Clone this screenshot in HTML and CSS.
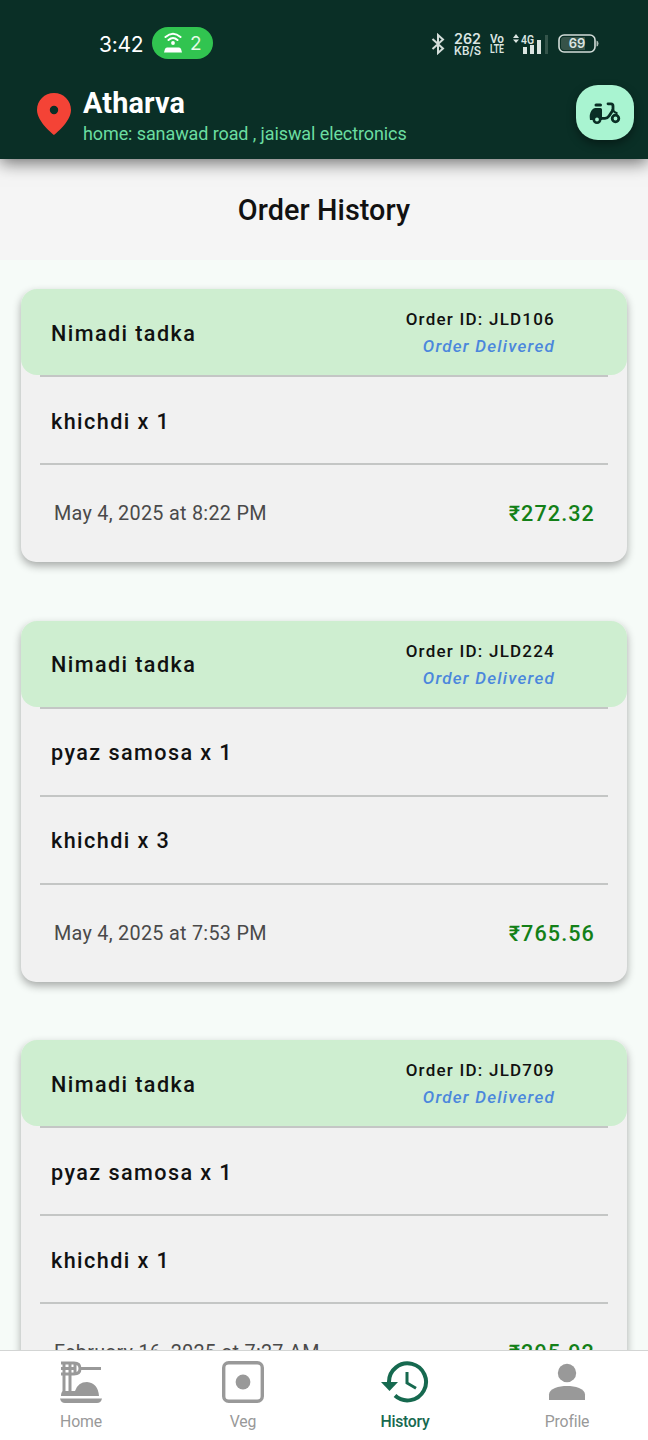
FILE: index.html
```html
<!DOCTYPE html>
<html lang="en">
<head>
<meta charset="utf-8">
<title>Order History</title>
<link rel="stylesheet" href="styles.css">
</head>
<body>
<div class="app">
  <header class="top">
    <div class="status">
      <span class="clock">3:42</span>
      <span class="hotspot">
        <svg width="20" height="22" viewBox="0 0 20 22" fill="none" stroke="#fff" stroke-width="2" stroke-linecap="round"><path d="M2.500 5Q10-1.500 17.500 5M5.500 8Q10 4 14.500 8"/><circle cx="10" cy="11" r="1.900" fill="#fff" stroke="none"/><path d="M4 15.500H16Q17.500 15.500 18 17L19 20.500H1L2 17Q2.500 15.500 4 15.500Z" fill="#fff" stroke="none"/></svg>
        <span>2</span>
      </span>
      <div class="indicators">
        <svg class="bt" width="14" height="22" viewBox="0 0 14 22" fill="none" stroke="#d3ddd9" stroke-width="2"><path d="M1.500 6L12 15.500L7 20V2L12 6.500L1.500 16"/></svg>
        <svg class="speed" width="28" height="26" viewBox="0 0 28 26"><text class="rate" x="0" y="13" textLength="27" lengthAdjust="spacingAndGlyphs">262</text><text class="unit" x="0" y="24" textLength="27" lengthAdjust="spacingAndGlyphs">KB/S</text></svg>
        <svg class="volte" width="15" height="26" viewBox="0 0 15 26"><text x="0" y="12" textLength="14" lengthAdjust="spacingAndGlyphs">Vo</text><text x="0" y="22" textLength="14" lengthAdjust="spacingAndGlyphs">LTE</text></svg>
        <svg class="signal" width="36" height="22" viewBox="0 0 36 22" fill="#dbe5e1"><path d="M0 5L3 1L6 5ZM0 6.500H6L3 10ZM10 14H14V21H10ZM17 12H21V21H17ZM24 7H28V21H24Z"/><path d="M32 2H35V21H32Z" fill="#34544a"/><text class="net" x="8" y="10.500" textLength="13" lengthAdjust="spacingAndGlyphs">4G</text></svg>
        <svg class="battery" width="42" height="20" viewBox="0 0 42 20"><rect x="1" y="1" width="36" height="17" rx="5" fill="none" stroke="#d3ddd9" stroke-width="1.600"/><path d="M6 3H27V16H6Q3 16 3 13V6Q3 3 6 3Z" fill="#365349"/><path d="M38.500 6.500Q40.500 7 40.500 9.500T38.500 12.500Z" fill="#aebdb6"/><text class="charge" x="19" y="14.300" text-anchor="middle">69</text></svg>
      </div>
    </div>
    <div class="address">
      <svg class="pin" width="34" height="42" viewBox="0 0 34 42"><path fill="#f44336" fill-rule="evenodd" d="M17 0C7.500 0 0 7.500 0 17C0 29 17 42 17 42S34 29 34 17C34 7.500 26.500 0 17 0ZM17 12.800A4.200 4.200 0 1 1 17 21.200A4.200 4.200 0 1 1 17 12.800Z"/></svg>
      <div class="place"><div class="name">Atharva</div><div class="street">home: sanawad road , jaiswal electronics</div></div>
      <button class="scooter" aria-label="Delivery"><svg width="32" height="22" viewBox="0 0 32 22"><path fill="#0a2e25" d="M7 1.500H11.500Q13 1.500 13 3T11.500 4.500H7Q5.500 4.500 5.500 3T7 1.500ZM6 6H11.500Q13 6 13 7.500V18H1Q0 12 2.500 8.500Q4 6 6 6Z"/><path d="M19 1.800H22Q24 1.800 24 4V8L20 14Q18.500 16.300 16 16.300H11" fill="none" stroke="#0a2e25" stroke-width="2.800" stroke-linecap="round"/><path d="M23 7Q25 10.500 28.500 11.500" fill="none" stroke="#0a2e25" stroke-width="2"/><circle cx="8" cy="17.500" r="3.200" fill="#a9f4d1" stroke="#0a2e25" stroke-width="2.600"/><circle cx="26.500" cy="16.500" r="3.300" fill="#a9f4d1" stroke="#0a2e25" stroke-width="2.800"/></svg></button>
    </div>
  </header>
  <h1 class="title">Order History</h1>
  <main class="orders">
    <article class="card">
      <div class="card-head"><span class="restaurant">Nimadi tadka</span><div class="meta"><span>Order ID: JLD106</span><em>Order Delivered</em></div></div>
      <div class="item">khichdi x 1</div>
      <div class="foot"><span>May 4, 2025 at 8:22 PM</span><strong>₹272.32</strong></div>
    </article>
    <article class="card">
      <div class="card-head"><span class="restaurant">Nimadi tadka</span><div class="meta"><span>Order ID: JLD224</span><em>Order Delivered</em></div></div>
      <div class="item">pyaz samosa x 1</div>
      <div class="item">khichdi x 3</div>
      <div class="foot"><span>May 4, 2025 at 7:53 PM</span><strong>₹765.56</strong></div>
    </article>
    <article class="card">
      <div class="card-head"><span class="restaurant">Nimadi tadka</span><div class="meta"><span>Order ID: JLD709</span><em>Order Delivered</em></div></div>
      <div class="item">pyaz samosa x 1</div>
      <div class="item">khichdi x 1</div>
      <div class="foot"><span>February 16, 2025 at 7:27 AM</span><strong>₹295.92</strong></div>
    </article>
  </main>
  <nav class="tabs">
    <a class="tab"><svg width="42" height="42" viewBox="0 0 42 42" fill="none" stroke="#999"><path stroke-width="3" d="M1 2H14Q20 2 20 7.500T14 13H1M1 7.500H14M4 1V33M10 1V33M15 2V13"/><path stroke-width="3" d="M20 7.500H41"/><path fill="#999" stroke="none" d="M3 30H15Q18 21 27 21Q38 22 39 35H1Q1 31 3 30ZM0 37.500H42Q41 42 37 42H5Q1 42 0 37.500Z"/></svg><span>Home</span></a>
    <a class="tab"><svg width="42" height="42" viewBox="0 0 42 42"><rect x="1.700" y="1.700" width="38.600" height="38.600" rx="5" fill="none" stroke="#999" stroke-width="3.400"/><circle cx="21" cy="21" r="7.400" fill="#999"/></svg><span>Veg</span></a>
    <a class="tab active"><svg width="48" height="42" viewBox="0 0 48 42"><path fill="none" stroke="#16694f" stroke-width="4" d="M8 22V21A18.500 18.500 0 1 1 14 34.500"/><path fill="#16694f" d="M0 21H17L8.500 30Z"/><path fill="none" stroke="#16694f" stroke-width="3" d="M26 11V22L35 27.300"/></svg><span>History</span></a>
    <a class="tab"><svg width="38" height="42" viewBox="0 0 38 42" fill="#999"><circle cx="19" cy="12" r="9.200"/><path d="M1 39V33.500C1 27.500 11 25 19 25S37 27.500 37 33.500V39Z"/></svg><span>Profile</span></a>
  </nav>
</div>
</body>
</html>
```
FILE: styles.css
```css
* { box-sizing: border-box; }
body { margin: 0; font-family: Roboto, "Noto Sans", sans-serif; }
.app { display: flex; flex-direction: column; width: 648px; height: 1440px; overflow: hidden; background: #f6fbf8; }
.top { flex: none; height: 159px; padding: 27px 14px 0 37px; background: #0a2f26; box-shadow: 0 4px 16px rgba(0,0,0,.55); z-index: 1; }
.status { display: flex; align-items: center; height: 32px; padding-left: 62px; }
.clock { width: 53px; padding-top: 2px; font: 400 21px Inter, sans-serif; letter-spacing: -.3px; color: #fff; }
.hotspot { display: flex; align-items: center; gap: 7px; width: 61px; height: 32px; padding-left: 11px; border-radius: 16px; background: #31c450; color: #e5fbe8; font: 400 19px Inter, sans-serif; }
.indicators { display: flex; align-items: center; margin-left: 218px; padding-top: 1px; }
.bt { margin-right: 9px; }
.speed { margin-right: 8px; fill: #dbe5e1; }
.rate { font: 600 14px Inter, sans-serif; }
.unit { font: 600 12px Inter, sans-serif; }
.volte { margin-right: 8px; fill: #dbe5e1; font: 600 12px Roboto, sans-serif; }
.signal { margin-right: 9px; }
.net { font: 600 13px Roboto, sans-serif; }
.charge { font: 600 13px Inter, sans-serif; fill: #dbe5e1; }
.address { display: flex; padding-top: 26px; }
.pin { margin-top: 8px; }
.place { flex: 1; padding: 1px 0 0 12px; }
.name { font-size: 28.800px; line-height: 35px; font-weight: 700; letter-spacing: .150px; color: #fff; }
.street { font-size: 18px; line-height: 26px; letter-spacing: -.100px; color: #6bdda0; }
.scooter { display: grid; place-items: center; width: 58px; height: 55px; padding: 0; border: 0; border-radius: 22px; background: #a9f4d1; box-shadow: 0 4px 10px rgba(0,0,0,.4); }
.title { flex: none; height: 101px; margin: 0; background: #f5f5f5; text-align: center; font-size: 28.800px; line-height: 102px; font-weight: 500; letter-spacing: .080px; color: #111; }
.orders { flex: 1; min-height: 0; overflow: hidden; display: flex; flex-direction: column; gap: 58.200px; padding: 29.200px 21px 0; }
.card { flex: none; border-radius: 15px; background: #f1f1f1; box-shadow: 0 4px 8px rgba(0,0,0,.32); }
.card-head { display: flex; justify-content: space-between; align-items: center; height: 86.200px; padding: 2px 72px 0 30px; border-radius: 16px; background: #ceeed0; }
.restaurant, .item { font-size: 21.600px; font-weight: 500; letter-spacing: 1.420px; color: #111; }
.meta { display: flex; flex-direction: column; align-items: flex-end; font-size: 17px; line-height: 27px; font-weight: 500; letter-spacing: 1.220px; color: #111; }
.meta em { color: #4b87dc; }
.item, .foot { display: flex; align-items: center; margin: 0 19px; border-top: 2px solid #c4c6c5; }
.item { height: 88px; padding: 2px 11px 0; }
.foot { justify-content: space-between; height: 99px; padding: 0 13px 0 14px; font-size: 19.800px; letter-spacing: .290px; color: #4a4a4a; }
.foot strong { font-size: 21.600px; font-weight: 500; letter-spacing: 1.100px; color: #138018; }
.tabs { flex: none; display: grid; grid-template-columns: repeat(4, 1fr); height: 90px; border-top: 1px solid #d3d5d4; background: #fff; z-index: 1; }
.tab { display: flex; flex-direction: column; align-items: center; padding-top: 10px; color: #999; font-size: 15.800px; line-height: 22px; letter-spacing: -.150px; }
.tab span { margin-top: 8px; }
.active { color: #16694f; font-weight: 500; letter-spacing: -.300px; }
```
